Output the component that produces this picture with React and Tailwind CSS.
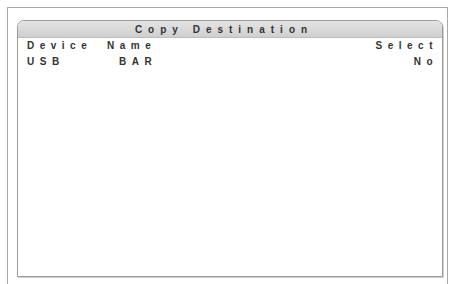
import React from 'react';

function Row({ name, value, select, nameWidth }) {
  return (
    <div className="flex items-center h-[16px] px-[9px] text-[10px] font-bold tracking-[5.5px] text-[#333]">
      <span className={nameWidth}>{name}</span>
      <span className="flex-1">{value}</span>
      <span className="mr-[-5px]">{select}</span>
    </div>
  );
}

export default function App() {
  return (
    <div className="w-[454px] h-[284px] bg-white pt-[7px] pl-[7px] pr-[6px] overflow-hidden" style={{ fontFamily: '"Liberation Sans", Arial, sans-serif' }}>
      <div className="h-full border-l border-t border-r border-[#a8a8a8] pt-[12px] pl-[9px] pr-[4px] pb-[7px]">
        <div className="h-full flex flex-col border border-[#9a9a9a] rounded-t-[7px] shadow-[1px_1px_0_#d0d0d0] bg-white">
          <div className="h-[17px] shrink-0 flex items-center justify-center rounded-t-[6px] bg-gradient-to-b from-[#e4e4e4] to-[#cfcfcf] border-b border-[#bcbcbc] pr-[12px] text-[10px] font-bold tracking-[6px] text-[#333]">
            Copy Destination
          </div>
          <div className="-mt-[1px]">
            <Row name="Device" value="Name" select="Select" nameWidth="w-[80px]" />
            <Row name="USB" value="BAR" select="No" nameWidth="w-[92px]" />
          </div>
        </div>
      </div>
    </div>
  );
}
